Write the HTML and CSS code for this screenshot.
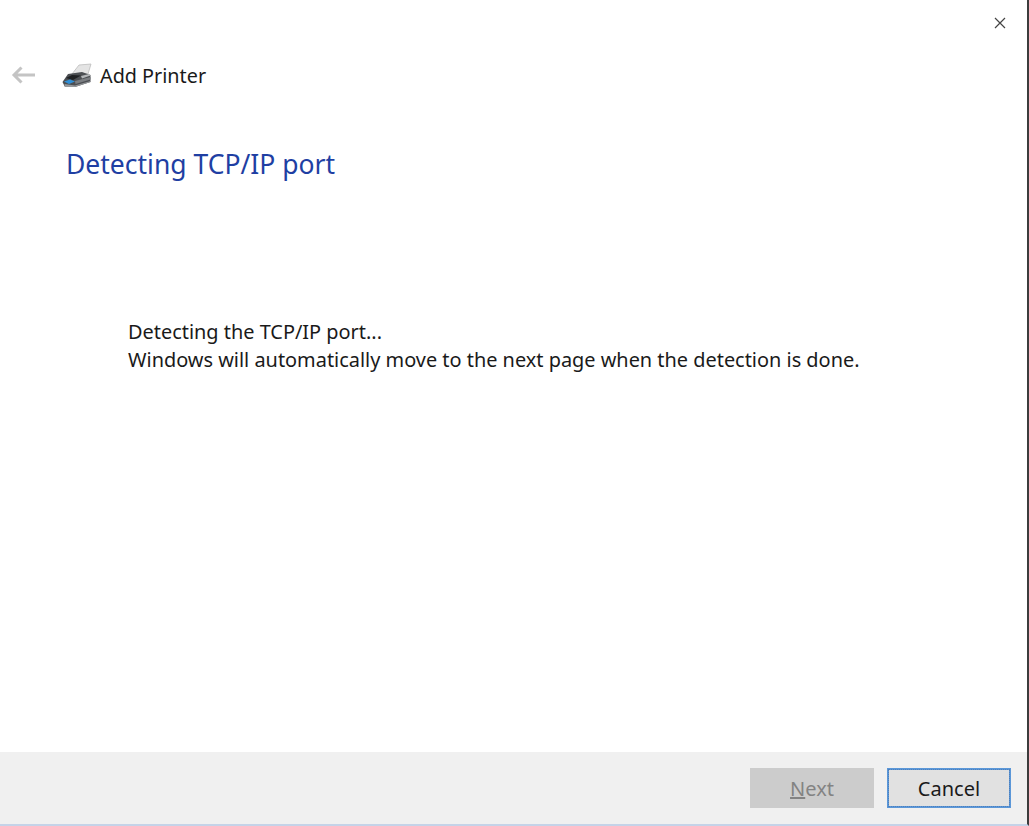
FILE: index.html
```html
<!DOCTYPE html>
<html lang="en">
<head>
<meta charset="utf-8">
<title>Add Printer</title>
<link rel="stylesheet" href="styles.css">
</head>
<body>
<div class="window">
  <div class="main">
    <div class="titlebar">
      <svg class="close" width="12" height="12" viewBox="0 0 12 12"><path d="M1 1 11 11M11 1 1 11" stroke="#444" stroke-width="1.2" fill="none"/></svg>
    </div>
    <div class="nav">
      <svg class="back" width="25" height="18" viewBox="0 0 25 18"><path d="M24 9H3M10.500 1.500 3 9l7.500 7.500" stroke="#c4c4c4" stroke-width="3" fill="none"/></svg>
      <svg class="printer" width="30" height="24" viewBox="0 0 30 24">
        <path d="M10 11 17 2 29 1 26 11z" fill="#e4e4e4" stroke="#bcbcbc" stroke-width=".8"/>
        <path d="M0.500 19 6 11 20 9 28.500 12V19L13 24H3z" fill="#4c4f53"/>
        <path d="M4 15 10 12 19 12.500 11 17z" fill="#1f2123"/>
        <path d="M19 13 27 11 28.500 12.500 20 15.500z" fill="#b4b7b9"/>
        <path d="M13 18 28.500 14v2.500L13.500 21z" fill="#7b7e82"/>
        <path d="M2 18.500 8 16.500 13 18.500 7 21z" fill="#2f8fd6"/>
        <path d="M2.500 21 13 22.500 28.500 18V19L13 24H3z" fill="#96999c"/>
      </svg>
      <span class="nav-title">Add Printer</span>
    </div>
    <h1 class="heading">Detecting TCP/IP port</h1>
    <div class="message">
      <p>Detecting the TCP/IP port...</p>
      <p>Windows will automatically move to the next page when the detection is done.</p>
    </div>
  </div>
  <div class="footer">
    <button class="btn btn-disabled" disabled><span class="key">N</span>ext</button>
    <button class="btn btn-default">Cancel</button>
  </div>
</div>
</body>
</html>
```
FILE: styles.css
```css
* { box-sizing: border-box; }
html, body { margin: 0; padding: 0; height: 100%; background: #fff; }
body { font-family: "Noto Sans", "Open Sans", sans-serif; color: #1a1a1a; overflow: hidden; }
.window {
  width: 1029px; height: 826px;
  display: flex; flex-direction: column;
  border-right: 2px solid #3c3c3c;
  border-bottom: 2px solid #c5d3e8;
}
.main { flex: 1; display: flex; flex-direction: column; }
.titlebar { height: 59px; display: flex; justify-content: flex-end; padding: 17px 21px 0 0; }
.close { display: block; }
.nav { display: flex; align-items: center; height: 32px; padding-left: 11px; }
.back { margin-right: 26px; }
.printer { margin-right: 8px; }
.nav-title { font-size: 19.8px; line-height: 32px; padding-top: 2px; }
.heading { margin: 55px 0 0 66px; font-size: 26.5px; line-height: 36px; font-weight: 400; color: #1f3fa3; }
.message { margin: 136px 0 0 128px; font-size: 19.92px; line-height: 28px; }
.message p { margin: 0; }
.footer {
  height: 72px; background: #f0f0f0;
  display: flex; justify-content: flex-end; align-items: flex-start; gap: 13px;
  padding: 16px 16px 0 0;
}
.btn { width: 124px; height: 40px; font: inherit; font-size: 20px; padding: 0; border-radius: 0; }
.btn-disabled { background: #cccccc; border: 1px solid #cccccc; color: #838383; }
.key { text-decoration: underline; }
.btn-default { background: #e1e1e1; border: 2px solid #5b97d8; color: #1a1a1a; outline: 1px dotted #4d80bd; outline-offset: -2px; }
```
